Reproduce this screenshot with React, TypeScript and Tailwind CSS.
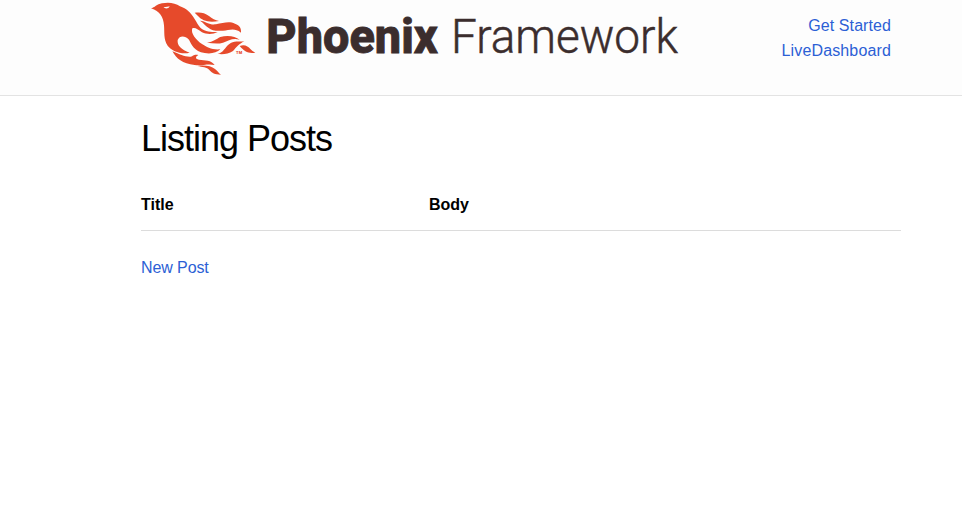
import React from "react";

function PhoenixLogo() {
  return (
    <svg className="block h-20 w-[550px] shrink-0" viewBox="0 0 550 80" role="img" aria-label="Phoenix Framework">
      <g transform="translate(4 0) scale(.333333)" fill="#e64a2b">
        <path d="M18 25C29 23 35 13 51 10C72 6 91 9 105 19C125 26 137 38 147 54C158 70 160 82 178 91C191 98 203 95 218 96C203 104 185 103 171 97C157 87 150 81 142 85C136 99 153 121 171 132C186 142 200 150 226 148C216 158 197 163 179 159C147 154 139 133 132 119C120 107 104 106 98 120C96 137 109 149 134 158C108 164 80 153 68 137C55 119 59 97 57 76C55 50 45 35 18 25Z" />
        <path d="M149 38C166 36 179 38 192 48C201 56 211 61 222 63C190 69 172 62 159 48Z" />
        <path d="M165 62C184 64 193 76 213 73C235 69 252 63 270 71C285 77 289 84 288 98C268 82 253 91 234 92C212 94 201 91 190 83C181 78 176 69 165 62Z" />
        <path d="M186 128C205 126 213 117 226 111C249 104 271 109 284 119C263 113 251 122 234 128C217 133 202 129 186 128Z" />
        <path d="M218 162C236 158 239 143 252 133C266 122 282 126 298 124C281 132 274 143 264 153C250 163 234 163 218 162Z" />
        <path d="M284 138C299 132 309 139 316 147Q322 154 331 158C309 161 299 155 284 138Z" />
        <path d="M82 154C105 163 119 171 137 170C146 169 144 163 160 165C151 170 150 177 162 179C180 181 199 180 209 195C187 190 171 198 149 195C112 192 94 175 82 154Z" />
        <path d="M157 198C180 195 198 198 210 207C218 213 221 220 228 224C209 224 201 219 193 210C186 201 172 201 157 198Z" />
        <text x="273" y="163" fontFamily="Roboto, sans-serif" fontWeight="900" fontSize="12" textLength="19">TM</text>
      </g>
      <path d="M22.5 7.1C25 6.9 27.5 6.7 28.7 6.2C27.5 8.7 24.3 9.3 22.5 7.1Z" fill="#fdfdfd" />
      <g fill="#3b2d2d" stroke="#3b2d2d" fontFamily="Roboto, sans-serif" fontSize="48">
        <text x="125.3" y="53.1" fontWeight="800" strokeWidth="0.9" textLength="171.5" lengthAdjust="spacingAndGlyphs">Phoenix</text>
        <text x="310" y="53.3" fontWeight="300" strokeWidth="0.5" textLength="227" lengthAdjust="spacingAndGlyphs">Framework</text>
      </g>
    </svg>
  );
}

export default function App() {
  return (
    <div className="min-h-[510px] bg-white font-['Liberation_Sans',Arial,sans-serif] text-base text-black">
      <header className="h-24 border-b border-[#e3e3e3] bg-[#fdfdfd]">
        <div className="ml-[141px] flex w-[760px] justify-between pr-[10px]">
          <PhoenixLogo />
          <nav className="flex flex-col items-end pt-[13px] leading-[25px] text-[#2c5fd5]">
            <a href="#" className="tracking-[0.08px]">Get Started</a>
            <a href="#" className="tracking-[0.14px]">LiveDashboard</a>
          </nav>
        </div>
      </header>
      <main className="ml-[141px] w-[760px]">
        <h1 className="pt-[21px] text-[36px] leading-[43px] tracking-[-1px]">Listing Posts</h1>
        <table className="mt-[19px] w-full table-fixed border-collapse text-left">
          <thead>
            <tr className="h-[51px] border-b border-[#dcdcdc] font-bold">
              <th className="w-[288px] pt-[2px]">Title</th>
              <th className="pt-[2px]">Body</th>
              <th className="w-[200px]" />
            </tr>
          </thead>
        </table>
        <a href="#" className="mt-6 inline-block leading-[25px] tracking-[-0.1px] text-[#2c5fd5]">New Post</a>
      </main>
    </div>
  );
}
